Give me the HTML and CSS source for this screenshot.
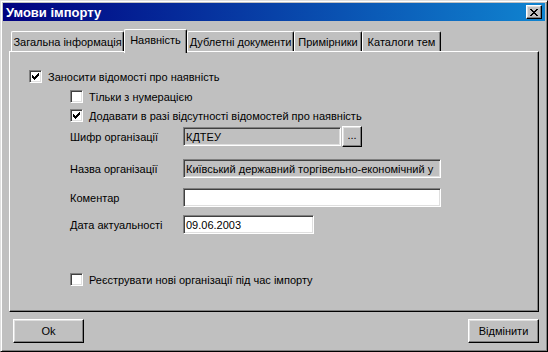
FILE: index.html
```html
<!DOCTYPE html>
<html lang="uk">
<head>
  <meta charset="UTF-8" />
  <title>Умови імпорту</title>
  <link rel="stylesheet" href="styles.css">
</head>
<body>
<div class="window">
  <div class="titlebar">
    <span class="title">Умови імпорту</span>
    <button class="close" type="button">
      <svg width="8" height="7" viewBox="0 0 8 7"><path d="M0 0h2v1h-2z M6 0h2v1h-2z M1 1h2v1h-2z M5 1h2v1h-2z M2 2h4v1h-4z M3 3h2v1h-2z M2 4h4v1h-4z M1 5h2v1h-2z M5 5h2v1h-2z M0 6h2v1h-2z M6 6h2v1h-2z"/></svg>
    </button>
  </div>

  <div class="content">
    <!-- tab headers -->
    <div class="tabs">
      <div class="tab t1">Загальна інформація</div>
      <div class="tab t2 active">Наявність</div>
      <div class="tab t3">Дублетні документи</div>
      <div class="tab t4">Примірники</div>
      <div class="tab t5">Каталоги тем</div>
    </div>

    <div class="panel">
      <div class="check c-main">
        <span class="box"><svg width="7" height="7" viewBox="0 0 7 7"><path d="M6 0h1v1h-1z M5 1h2v1h-2z M0 2h1v1h-1z M4 2h3v1h-3z M0 3h2v1h-2z M3 3h3v1h-3z M0 4h5v1h-5z M1 5h3v1h-3z M2 6h1v1h-1z"/></svg></span>
        Заносити відомості про наявність
      </div>
      <div class="check c-sub c-2">
        <span class="box"></span>
        Тільки з нумерацією
      </div>
      <div class="check c-sub c-3">
        <span class="box"><svg width="7" height="7" viewBox="0 0 7 7"><path d="M6 0h1v1h-1z M5 1h2v1h-2z M0 2h1v1h-1z M4 2h3v1h-3z M0 3h2v1h-2z M3 3h3v1h-3z M0 4h5v1h-5z M1 5h3v1h-3z M2 6h1v1h-1z"/></svg></span>
        Додавати в разі відсутності відомостей про наявність
      </div>

      <div class="field f-code">
        <span class="label">Шифр організації</span>
        <div class="input ro w-short">КДТЕУ</div>
        <button class="btn dots" type="button">...</button>
      </div>
      <div class="field f-name">
        <span class="label">Назва організації</span>
        <div class="input ro w-long">Київський державний торгівельно-економічний у</div>
      </div>
      <div class="field f-note">
        <span class="label">Коментар</span>
        <div class="input w-long"></div>
      </div>
      <div class="field f-date">
        <span class="label">Дата актуальності</span>
        <div class="input w-date">09.06.2003</div>
      </div>

      <div class="check c-sub c-4">
        <span class="box"></span>
        Реєструвати нові організації під час імпорту
      </div>
    </div>

    <div class="buttons">
      <button class="btn action" type="button">Ok</button>
      <button class="btn action" type="button">Відмінити</button>
    </div>
  </div>
</div>
</body>
</html>
```

FILE: styles.css
```css
body {
  margin: 0;
  background: #c0c0c0;
  font-family: "Liberation Sans", Arial, sans-serif;
  font-size: 11px;
  color: #000;
}

.window {
  width: 548px;
  height: 352px;
  box-sizing: border-box;
  padding: 2px;
  background: #c0c0c0;
  border: 1px solid;
  border-color: #dfdfdf #000 #000 #dfdfdf;
  box-shadow: inset 1px 1px #fff, inset -1px -1px #808080;
  display: flex;
  flex-direction: column;
}

.titlebar {
  height: 18px;
  display: flex;
  align-items: center;
  justify-content: space-between;
  padding: 0 3px 0 3px;
  background: linear-gradient(to right, #000080, #1084d0);
  color: #fff;
}

.title {
  font-weight: bold;
  font-size: 13px;
}

.close {
  width: 16px;
  height: 14px;
  padding: 0;
  display: flex;
  align-items: center;
  justify-content: center;
}

/* raised 3d look shared by all buttons */
.close,
.btn {
  box-sizing: border-box;
  background: #c0c0c0;
  border: 1px solid;
  border-color: #fff #000 #000 #fff;
  box-shadow: inset -1px -1px #808080, inset 1px 1px #dfdfdf;
  font: inherit;
  color: #000;
}

.content {
  padding: 0 6px;
}

/* tabs */
.tabs {
  display: flex;
  align-items: flex-end;
  height: 22px;
  margin-top: 8px;
  padding-left: 2px;
}

.tab {
  height: 20px;
  box-sizing: border-box;
  display: flex;
  align-items: center;
  justify-content: center;
  border-left: 1px solid #fff;
  border-top: 1px solid #fff;
  border-right: 1px solid #000;
  border-radius: 2px 2px 0 0;
  box-shadow: inset -1px 0 #808080;
  white-space: nowrap;
  padding-top: 1px;
}

.tab.active {
  height: 24px;
  margin-bottom: -2px;
  position: relative;
  z-index: 1;
  background: #c0c0c0;
  padding: 0 0 3px;
}

.t1 { width: 113px; }
.t2 { width: 63px; }
.t3 { width: 107px; }
.t4 { width: 68px; }
.t5 { width: 79px; }

.panel {
  height: 261px;
  box-sizing: border-box;
  border: 1px solid;
  border-color: #fff #000 #000 #fff;
  box-shadow: inset -1px -1px #808080;
  display: flex;
  flex-direction: column;
  align-items: flex-start;
}

/* checkboxes */
.check {
  display: flex;
  align-items: center;
  gap: 6px;
  height: 13px;
  white-space: nowrap;
}

.c-main { margin: 18px 0 0 19px; }
.c-sub { margin-left: 60px; }
.c-2 { margin-top: 7px; }
.c-3 { margin-top: 6px; }
.c-4 { margin-top: 39px; }

.box,
.input {
  box-sizing: border-box;
  border: 1px solid;
  border-color: #808080 #fff #fff #808080;
  box-shadow: inset 1px 1px #404040, inset -1px -1px #dfdfdf;
  background: #fff;
}

.box {
  width: 13px;
  height: 13px;
  flex-shrink: 0;
  display: flex;
  align-items: center;
  justify-content: center;
}

/* label + edit rows */
.field {
  display: flex;
  align-items: center;
  margin-left: 60px;
}

.f-code { height: 21px; margin-top: 4px; }
.f-name { height: 19px; margin-top: 12px; }
.f-note { height: 19px; margin-top: 10px; }
.f-date { height: 19px; margin-top: 8px; }

.label {
  width: 113px;
}

.input {
  height: 19px;
  padding: 0 2px;
  display: flex;
  align-items: center;
  white-space: nowrap;
  overflow: hidden;
}

.input.ro {
  background: #c0c0c0;
}

.w-short { width: 158px; }
.w-long { width: 258px; }
.w-date { width: 131px; }

.dots {
  width: 20px;
  height: 21px;
  margin-left: 1px;
  padding: 0 0 3px;
  line-height: 1;
}

.buttons {
  display: flex;
  justify-content: space-between;
  margin-top: 7px;
  padding-left: 4px;
}

.action {
  width: 71px;
  height: 24px;
  padding: 0;
}
```
